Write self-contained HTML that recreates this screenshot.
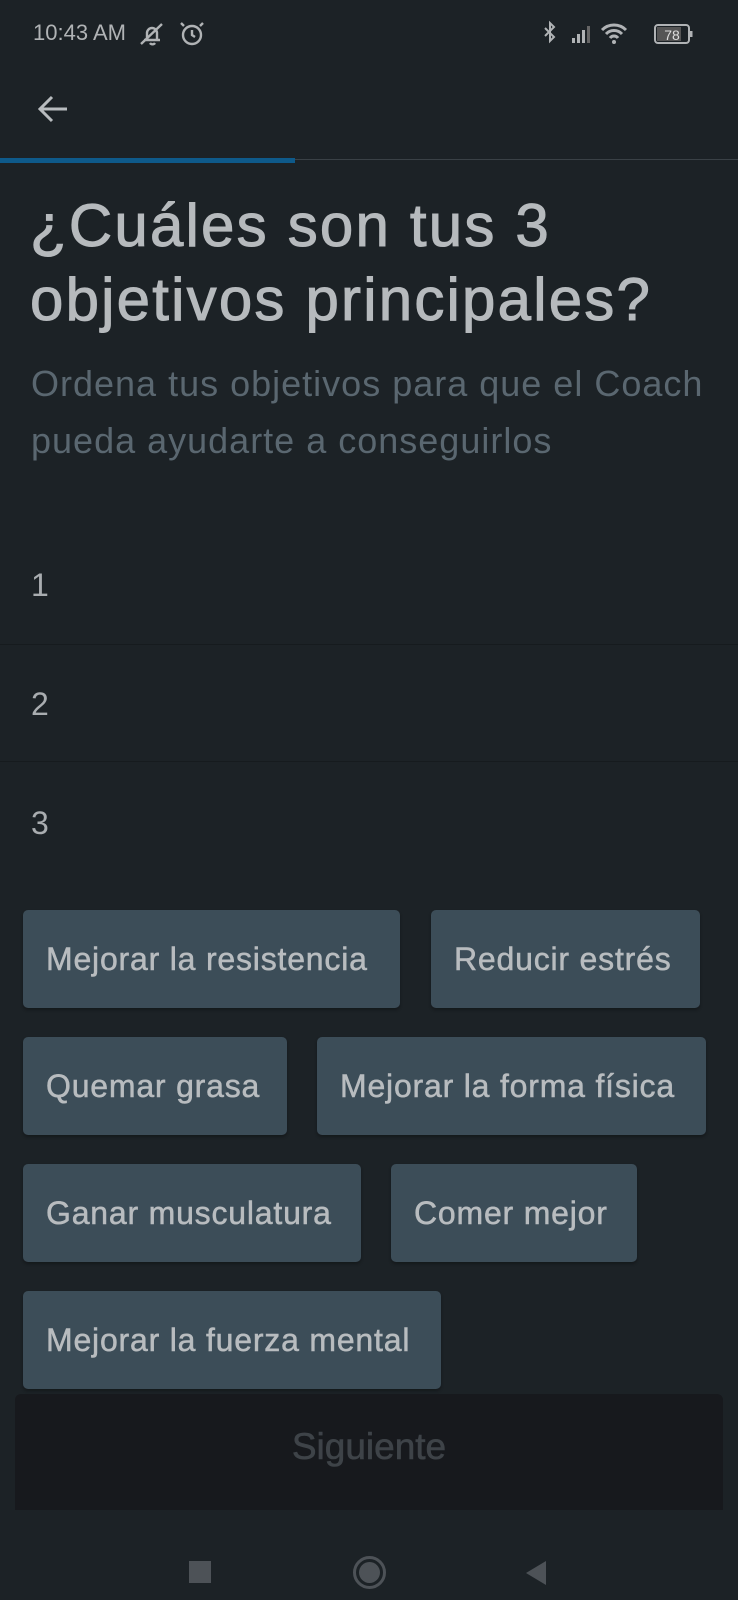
<!DOCTYPE html>
<html><head><meta charset="utf-8"><style>
body{margin:0;width:738px;height:1600px;background:#1c2226;font-family:"Liberation Sans",sans-serif;position:relative;overflow:hidden;color:#b5b9bc}
.abs{position:absolute}
.chip{position:absolute;background:#3c4d58;border-radius:5px;color:#b8bcbf;font-size:32px;line-height:98px;padding-left:23px;box-sizing:border-box;white-space:nowrap;-webkit-text-stroke:0.5px #b8bcbf;letter-spacing:0.8px;box-shadow:0 2px 3px rgba(0,0,0,.3)}
.num{position:absolute;left:31px;font-size:32px;color:#a9adb0}
.div{position:absolute;left:0;width:738px;height:1px;background:#161b1e}
</style></head><body>
<div class="abs" style="left:33px;top:20px;font-size:22px;color:#b0b3b5">10:43 AM</div>
<svg class="abs" style="left:138px;top:20px" width="70" height="28" viewBox="0 0 70 28" fill="none" stroke="#b0b3b5" stroke-width="2.4"><path d="M6 20h16M9 20v-7a5 5 0 0110 0v7M3 24L24 4M12 23a3 3 0 005 0"/><circle cx="54" cy="15" r="9"/><path d="M54 10v5l3 2M46 6l-3-3M62 6l3-3"/></svg>
<svg class="abs" style="left:540px;top:20px" width="165" height="28" viewBox="0 0 165 28"><path d="M5 8l9 9-4 4V3l4 4-9 9" fill="none" stroke="#b0b3b5" stroke-width="2"/><rect x="32" y="18" width="3" height="5" fill="#b0b3b5"/><rect x="37" y="14" width="3" height="9" fill="#b0b3b5"/><rect x="42" y="10" width="3" height="13" fill="#b0b3b5"/><rect x="47" y="6" width="3" height="17" fill="#666"/><path d="M62 10a17 17 0 0124 0M66 14a11 11 0 0116 0M70 18a5 5 0 018 0" fill="none" stroke="#b0b3b5" stroke-width="3"/><circle cx="74" cy="22" r="2" fill="#b0b3b5"/><rect x="115" y="5" width="34" height="18" rx="3" fill="none" stroke="#b0b3b5" stroke-width="2"/><rect x="117" y="7" width="24" height="14" fill="#555"/><rect x="150" y="11" width="2.5" height="6" fill="#b0b3b5"/><text x="132" y="20" font-size="14" fill="#ddd" text-anchor="middle" font-family="Liberation Sans">78</text></svg>
<svg class="abs" style="left:36px;top:92px" width="34" height="34" viewBox="0 0 34 34" fill="none" stroke="#b8bcbf" stroke-width="3"><path d="M31 17H4M16 5L4 17l12 12"/></svg>
<div class="abs" style="left:0;top:159px;width:738px;height:1px;background:#3a4146"></div>
<div class="abs" style="left:0;top:158px;width:295px;height:5px;background:#0e5a8a"></div>
<div class="abs" style="left:30px;top:189px;font-size:60px;line-height:74px;color:#b6babd;letter-spacing:2.2px;-webkit-text-stroke:1px #b6babd;white-space:nowrap">¿Cuáles son tus 3<br>objetivos principales?</div>
<div class="abs" style="left:31px;top:355px;font-size:36px;line-height:57px;color:#5a6770;letter-spacing:1px;white-space:nowrap">Ordena tus objetivos para que el Coach<br>pueda ayudarte a conseguirlos</div>
<div class="num" style="top:567px">1</div>
<div class="div" style="top:644px"></div>
<div class="num" style="top:686px">2</div>
<div class="div" style="top:761px"></div>
<div class="num" style="top:805px">3</div>
<div class="chip" style="left:23px;top:910px;width:377px">Mejorar la resistencia</div>
<div class="chip" style="left:431px;top:910px;width:269px">Reducir estrés</div>
<div class="chip" style="left:23px;top:1037px;width:264px">Quemar grasa</div>
<div class="chip" style="left:317px;top:1037px;width:389px">Mejorar la forma física</div>
<div class="chip" style="left:23px;top:1164px;width:338px">Ganar musculatura</div>
<div class="chip" style="left:391px;top:1164px;width:246px">Comer mejor</div>
<div class="chip" style="left:23px;top:1291px;width:418px">Mejorar la fuerza mental</div>
<div class="abs" style="left:15px;top:1394px;width:708px;height:116px;background:#17191d;border-radius:6px 6px 0 0;color:#3e4348;font-size:37px;text-align:center;line-height:106px;-webkit-text-stroke:0.6px #3e4348">Siguiente</div>
<div class="abs" style="left:0;top:1510px;width:738px;height:90px;background:#1c2226"></div>
<div class="abs" style="left:189px;top:1561px;width:22px;height:22px;background:#4d5257"></div>
<div class="abs" style="left:353px;top:1556px;width:27px;height:27px;border:3px solid #4d5257;border-radius:50%"><div style="margin:3px;width:21px;height:21px;border-radius:50%;background:#4d5257"></div></div>
<svg class="abs" style="left:524px;top:1560px" width="24" height="26"><path d="M22 1L2 13l20 12z" fill="#4d5257"/></svg>
</body></html>
